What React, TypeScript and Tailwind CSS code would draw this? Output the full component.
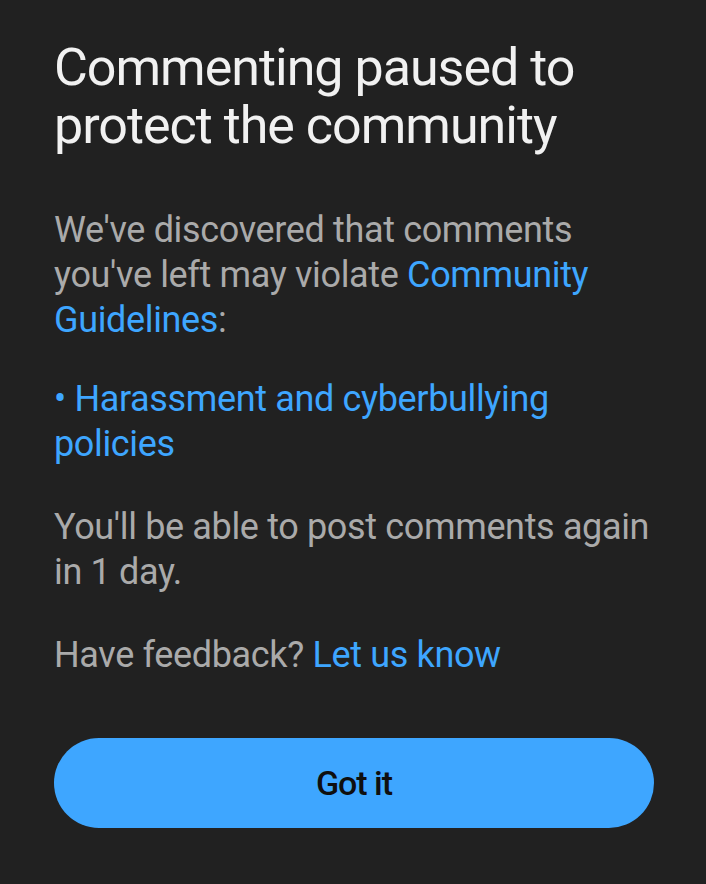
import React from 'react';

const font = { fontFamily: 'Roboto, "Noto Sans", sans-serif' };

export default function App() {
  return (
    <div className="min-h-[884px] w-full bg-[#212121]" style={font}>
      <div className="px-[54px] pt-[39px]">
        <h1 className="text-[52px] leading-[58px] tracking-[-1px] text-[#f1f1f1] font-normal">
          Commenting paused to protect the community
        </h1>

        <div className="mt-[53px] text-[36px] leading-[45px] tracking-[-0.35px] text-[#aaaaaa]">
          <p>
            We've discovered that comments you've left may violate{' '}
            <a className="text-[#3ea6ff]">Community Guidelines</a>:
          </p>

          <p className="mt-[34px] text-[#3ea6ff]">• Harassment and cyberbullying policies</p>

          <p className="mt-[38px]">You'll be able to post comments again in 1 day.</p>

          <p className="mt-[38px]">
            Have feedback? <a className="text-[#3ea6ff]">Let us know</a>
          </p>
        </div>

        <button className="mt-[60px] flex h-[90px] w-[600px] items-center justify-center rounded-full bg-[#3ea6ff] text-[34px] tracking-[-1px] font-medium text-[#0f0f0f]">
          Got it
        </button>
      </div>
    </div>
  );
}
